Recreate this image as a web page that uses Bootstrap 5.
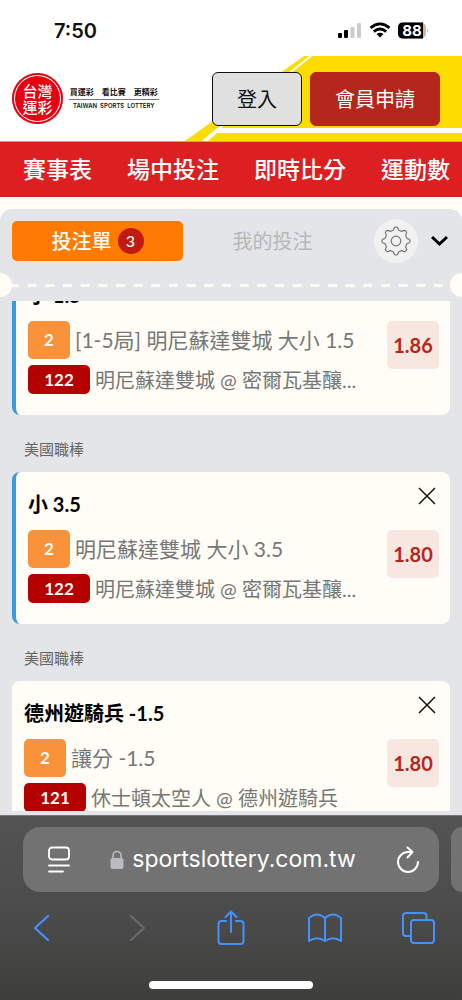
<!DOCTYPE html>
<html lang="zh-Hant">
<head>
<meta charset="utf-8">
<meta name="viewport" content="width=device-width, initial-scale=1">
<title>台灣運彩</title>
<link rel="stylesheet" href="https://cdn.jsdelivr.net/npm/bootstrap@5.3.0/dist/css/bootstrap.min.css">
<style>
body { background: #fffdf5; color: #111; font-family: Lato, "Noto Sans CJK TC", sans-serif; }
svg { display: block; }
.status-bar, .url-field, .logo-en { font-family: Inter, "Noto Sans CJK TC", sans-serif; }
.status-bar { height: 56px; padding: 6px 34px 0 54px; font-size: 20px; font-weight: 600; }

.site-head { height: 86px; padding: 0 22px 0 12px; border-bottom: 1px solid #e0b000; }
.head-stripes { position: absolute; top: 0; right: 0; z-index: 0; }
.brand { gap: 6px; color: #111; }
.seal { width: 51px; height: 51px; border-radius: 50%; background: #e60012; box-shadow: inset 0 0 0 2px #e60012, inset 0 0 0 3px #fff; color: #fff; font-size: 15px; line-height: 16px; font-weight: 500; }
.logo-zh { gap: 8px; font-size: 8px; line-height: 12px; font-weight: 700; padding-bottom: 1px; }
.logo-en { gap: 3px; font-size: 6px; line-height: 11px; font-weight: 600; border-top: 1px solid #777; padding: 0 4px; }
.head-btn { height: 54px; border-radius: 6px; font-size: 20px; padding: 0; }
.btn-login { width: 90px; background: #e0e0e0; border: 1px solid #111; color: #111; }
.btn-join { width: 130px; background: #b5261c; border: 1px solid #b5261c; color: #fff; }

.main-nav { height: 55px; padding: 0 12px 0 23px; gap: 35px; background: #dc1f20; white-space: nowrap; }
.main-nav a { color: #fff; font-size: 23px; font-weight: 500; }

.slip { margin-top: 12px; padding-bottom: 4px; background: #e4e5e8; border-radius: 12px 12px 0 0; min-height: 0; }
.slip-tabs { height: 64px; padding: 0 14px 0 12px; gap: 4px; }
.slip-tab { flex: 1 1 0; height: 40px; border: 0; border-radius: 5px; padding: 0; font-size: 20px; color: #b6b8ba; }
.slip-tab.active { background: #ff7a00; color: #fffdf5; font-weight: 500; gap: 6px; }
.count { width: 26px; height: 26px; border-radius: 50%; background: #c01a13; font-size: 16px; }
.gear { width: 44px; height: 44px; border: 0; border-radius: 50%; background: #f1f1f1; margin: 0 9px 0 12px; }
.tear { height: 24px; margin-bottom: 4px; overflow: hidden; }
.tear::before, .tear::after { content: ""; width: 24px; height: 24px; border-radius: 50%; background: #fffdf5; flex: none; }
.tear::before { margin-left: -12px; }
.tear::after { margin-right: -12px; }
.tear i { flex: 1; height: 3px; margin: 0 -2px; background: linear-gradient(90deg, #fffdf5 52%, transparent 52%) 0 0 / 4% 3px; }
.slip-list { padding: 0 12px; min-height: 0; scrollbar-width: none; }
.slip-list::-webkit-scrollbar { display: none; }

.bet { height: 152px; border-radius: 8px; background: #fffdf5; padding: 12px 11px 0 12px; }
.bet.live { border-left: 4px solid #3a9bdc; }
.bet h2 { font-size: 20px; line-height: 40px; font-weight: 700; margin: 0; color: #000; }
.bet-close { width: 24px; height: 24px; border: 0; padding: 3px; background: none; }
.bet-body { margin-top: 6px; }
.bet-line { gap: 5px; color: #777; min-width: 0; white-space: nowrap; }
.pick { height: 38px; font-size: 21px; }
.game { height: 29px; font-size: 20px; line-height: 28px; margin-top: 6px; }
.tag-type, .tag-no { display: flex; align-items: center; justify-content: center; flex: none; height: 100%; border-radius: 5px; color: #fffdf5; font-size: 17px; font-weight: 700; }
.tag-type { width: 42px; background: #f99238; }
.tag-no { width: 62px; background: #b50000; }
.odds { width: 52px; height: 48px; border: 0; border-radius: 5px; padding: 0; background: #f8e7e0; color: #b5261c; font-size: 20px; font-weight: 700; }
.league { height: 57px; padding: 12px 12px 0; font-size: 15px; line-height: 44px; color: #666; margin: 0; }

.browser { background: linear-gradient(#535353, #4c4c4c 50%, #3e3e3c); border-top: 1px solid #777; padding-top: 11px; }
.url-row { gap: 12px; padding-left: 23px; overflow: hidden; }
.url-field { height: 65px; border-radius: 17px; background: #727272; padding: 0 18px 0 24px; color: #fff; font-size: 23px; }
.next-tab { width: 11px; height: 65px; border-radius: 17px 0 0 17px; background: #727272; }
.tools { padding: 18px 25px 0; }
.plain { border: 0; padding: 0; background: none; }
.home-bar { width: 164px; height: 8px; border-radius: 4px; background: #fff; margin: 35px auto 11px; }
</style>
</head>
<body class="d-flex flex-column vh-100 overflow-hidden">

<div class="status-bar bg-white d-flex align-items-center justify-content-between flex-shrink-0">
  <span>7:50</span>
  <svg width="92" height="18" viewBox="0 0 92 18" role="img" aria-label="訊號、Wi-Fi、電量 88">
    <rect x="2" y="11" width="4" height="5" rx="1"/><rect x="8" y="8" width="4" height="8" rx="1"/>
    <rect x="14.500" y="5" width="4" height="11" rx="1" fill="#ccc"/><rect x="21" y="1" width="4" height="15" rx="1" fill="#ccc"/>
    <g fill="none" stroke="#000" stroke-width="2.800"><path d="M34.500 5.800Q44 -2 53.500 5.800"/><path d="M37.800 9.600Q44 4.400 50.200 9.600"/></g>
    <path d="M40.500 12Q44 9.400 47.500 12L44 15.600Z"/>
    <rect x="62" y="0.500" width="28" height="16" rx="5" fill="#bbb"/><path d="M67 .5H87V16.500H67Q62 16.500 62 11.500V5.500Q62 .5 67 .5Z"/>
    <path d="M91 6Q93 8.500 91 11Z" fill="#bbb"/>
    <text x="76" y="14" fill="#fff" font-size="15" font-weight="700" text-anchor="middle">88</text>
  </svg>
</div>

<header class="site-head bg-white position-relative d-flex align-items-center flex-shrink-0">
  <svg class="head-stripes" width="280" height="85" viewBox="0 0 280 85" aria-hidden="true">
    <path d="M122 0H280V85H3Z" fill="#ffdc00"/>
    <path d="M129 0L21 85" stroke="#fff" stroke-width="2"/>
    <path d="M35 72H280V77H35L26 85H20Z" fill="#fff"/>
  </svg>
  <a href="#" class="brand d-flex align-items-center text-decoration-none me-auto position-relative">
    <span class="seal d-flex flex-column align-items-center justify-content-center"><span>台灣</span><span>運彩</span></span>
    <span>
      <span class="logo-zh d-flex justify-content-center"><span>買運彩</span><span>看比賽</span><span>更精彩</span></span>
      <span class="logo-en d-flex justify-content-center"><span>TAIWAN</span><span>SPORTS</span><span>LOTTERY</span></span>
    </span>
  </a>
  <div class="d-flex gap-2 position-relative">
    <button type="button" class="btn head-btn btn-login">登入</button>
    <button type="button" class="btn head-btn btn-join">會員申請</button>
  </div>
</header>

<nav class="main-nav d-flex align-items-center flex-shrink-0 overflow-hidden">
  <a class="text-decoration-none" href="#">賽事表</a>
  <a class="text-decoration-none" href="#">場中投注</a>
  <a class="text-decoration-none" href="#">即時比分</a>
  <a class="text-decoration-none" href="#">運動數</a>
</nav>

<main class="slip d-flex flex-column flex-grow-1">
  <div class="slip-tabs d-flex align-items-center flex-shrink-0">
    <button type="button" class="btn slip-tab active d-flex align-items-center justify-content-center">投注單<span class="count d-flex align-items-center justify-content-center">3</span></button>
    <button type="button" class="btn slip-tab">我的投注</button>
    <button type="button" class="gear d-flex align-items-center justify-content-center p-0" aria-label="設定">
      <svg width="30" height="30" viewBox="0 0 30 30" fill="none" stroke="#777" stroke-width="1.200" stroke-linejoin="round"><circle cx="15" cy="15" r="4.800"/><path id="cog"/></svg>
    </button>
    <button type="button" class="plain" aria-label="收合"><svg width="17" height="12" viewBox="0 0 17 12" fill="none" stroke="#000" stroke-width="3"><path d="M1 2L8.500 9L16 2"/></svg></button>
  </div>
  <div class="tear d-flex align-items-center flex-shrink-0" aria-hidden="true"><i></i></div>

  <div class="slip-list flex-grow-1 overflow-auto">
    <article class="bet live">
      <div class="d-flex justify-content-between align-items-start"><h2>小 1.5</h2>
        <button type="button" class="bet-close" aria-label="移除"><svg width="18" height="18" viewBox="0 0 18 18" stroke="#111" stroke-width="1.500"><path d="M1 1L17 17M17 1L1 17"/></svg></button></div>
      <div class="bet-body d-flex justify-content-between align-items-start">
        <div>
          <div class="bet-line pick d-flex align-items-center"><span class="tag-type">2</span>[1-5局] 明尼蘇達雙城 大小 1.5</div>
          <div class="bet-line game d-flex align-items-center"><span class="tag-no">122</span>明尼蘇達雙城 @ 密爾瓦基釀...</div>
        </div>
        <button type="button" class="odds">1.86</button>
      </div>
    </article>
    <p class="league">美國職棒</p>
    <article class="bet live">
      <div class="d-flex justify-content-between align-items-start"><h2>小 3.5</h2>
        <button type="button" class="bet-close" aria-label="移除"><svg width="18" height="18" viewBox="0 0 18 18" stroke="#111" stroke-width="1.500"><path d="M1 1L17 17M17 1L1 17"/></svg></button></div>
      <div class="bet-body d-flex justify-content-between align-items-start">
        <div>
          <div class="bet-line pick d-flex align-items-center"><span class="tag-type">2</span>明尼蘇達雙城 大小 3.5</div>
          <div class="bet-line game d-flex align-items-center"><span class="tag-no">122</span>明尼蘇達雙城 @ 密爾瓦基釀...</div>
        </div>
        <button type="button" class="odds">1.80</button>
      </div>
    </article>
    <p class="league">美國職棒</p>
    <article class="bet">
      <div class="d-flex justify-content-between align-items-start"><h2>德州遊騎兵 -1.5</h2>
        <button type="button" class="bet-close" aria-label="移除"><svg width="18" height="18" viewBox="0 0 18 18" stroke="#111" stroke-width="1.500"><path d="M1 1L17 17M17 1L1 17"/></svg></button></div>
      <div class="bet-body d-flex justify-content-between align-items-start">
        <div>
          <div class="bet-line pick d-flex align-items-center"><span class="tag-type">2</span>讓分 -1.5</div>
          <div class="bet-line game d-flex align-items-center"><span class="tag-no">121</span>休士頓太空人 @ 德州遊騎兵</div>
        </div>
        <button type="button" class="odds">1.80</button>
      </div>
    </article>
  </div>
</main>

<footer class="browser flex-shrink-0">
  <div class="url-row d-flex">
    <div class="url-field d-flex align-items-center justify-content-between flex-grow-1">
      <button type="button" class="plain" aria-label="頁面選單"><svg width="24" height="28" viewBox="0 0 24 28" fill="none" stroke="#fff" stroke-width="1.800" stroke-linecap="round"><rect x="2" y="1.500" width="20" height="12" rx="3"/><path d="M2 19.500H22M2 25.500H16"/></svg></button>
      <span class="d-flex align-items-center gap-2">
        <svg width="14" height="20" viewBox="0 0 14 20"><rect x="0.500" y="8" width="13" height="11" rx="2" fill="#bbb9c2"/><path d="M3 9V5.500a4 4 0 0 1 8 0V9" fill="none" stroke="#bbb9c2" stroke-width="1.600"/></svg>
        <span>sportslottery.com.tw</span>
      </span>
      <button type="button" class="plain" aria-label="重新載入"><svg width="26" height="28" viewBox="0 0 26 28" fill="none" stroke="#fff" stroke-width="2" stroke-linecap="round" stroke-linejoin="round"><path d="M17.500 6H13A10 10 0 1 0 23 16M12.500 1.500L17.500 6L12.500 11.500"/></svg></button>
    </div>
    <div class="next-tab"></div>
  </div>
  <div class="tools d-flex justify-content-between">
    <button type="button" class="plain" aria-label="上一頁"><svg width="36" height="36" viewBox="0 0 36 36" fill="none" stroke="#4391ff" stroke-width="2.200" stroke-linecap="round" stroke-linejoin="round"><path d="M23 6L10 18L23 30"/></svg></button>
    <button type="button" class="plain" aria-label="下一頁"><svg width="36" height="36" viewBox="0 0 36 36" fill="none" stroke="#6a6a6a" stroke-width="2.200" stroke-linecap="round" stroke-linejoin="round"><path d="M12 6L25 18L12 30"/></svg></button>
    <button type="button" class="plain" aria-label="分享"><svg width="36" height="36" viewBox="0 0 36 36" fill="none" stroke="#4391ff" stroke-width="2" stroke-linecap="round" stroke-linejoin="round"><path d="M13 11H8.500Q5.500 11 5.500 14V31Q5.500 34 8.500 34H27.500Q30.500 34 30.500 31V14Q30.500 11 27.500 11H23M18 22V2M12.500 7L18 1.500L23.500 7"/></svg></button>
    <button type="button" class="plain" aria-label="書籤"><svg width="36" height="36" viewBox="0 0 36 36" fill="none" stroke="#4391ff" stroke-width="2" stroke-linecap="round" stroke-linejoin="round"><path d="M18 8Q10 1 2 8V31Q10 25.500 18 31Q26 25.500 34 31V8Q26 1 18 8V31"/></svg></button>
    <button type="button" class="plain" aria-label="分頁"><svg width="36" height="36" viewBox="0 0 36 36" fill="none" stroke="#4391ff" stroke-width="2"><rect x="10" y="10" width="23" height="23" rx="3"/><path d="M10 26H5Q2 26 2 23V6Q2 3 5 3H22Q25.500 3 25.500 6V10"/></svg></button>
  </div>
  <div class="home-bar"></div>
</footer>

<script src="https://cdn.jsdelivr.net/npm/bootstrap@5.3.0/dist/js/bootstrap.bundle.min.js"></script>
<script>
// Eight-toothed cog outline
const pts = [];
for (let a = 0; a <= 360; a += 3) {
  const t = a * Math.PI / 180;
  const r = 12.6 + 1.6 * Math.tanh(1.8 * (Math.cos(8 * t) - 0.25));
  pts.push((15 + r * Math.cos(t)).toFixed(2) + ' ' + (15 + r * Math.sin(t)).toFixed(2));
}
document.getElementById('cog').setAttribute('d', 'M' + pts.join('L') + 'Z');
// Slip opens slightly scrolled, with the first title under the tear line
document.querySelector('.slip-list').scrollTop = 38;
</script>
</body>
</html>
